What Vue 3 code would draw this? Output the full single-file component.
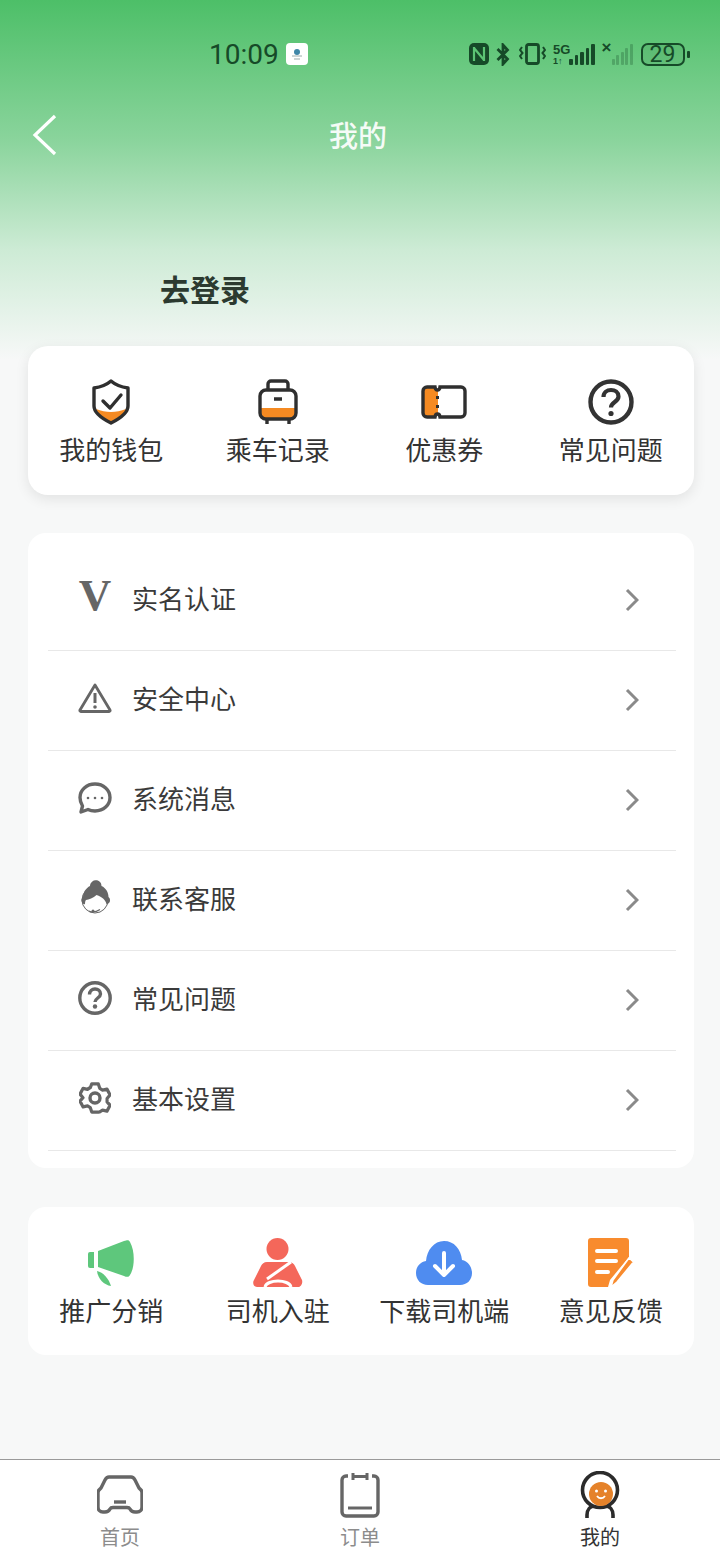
<template>
  <div class="page">
    <div class="status">
      <span class="time">10:09</span>
      <span class="app-badge">
        <svg width="14" height="14" viewBox="0 0 14 14">
          <circle cx="7" cy="5" r="3" fill="#3f86a8" />
          <path d="M2 9h10M4 12h6" stroke="#9aa" stroke-width="1" />
        </svg>
      </span>
      <svg class="st-nfc" width="20" height="22" viewBox="0 0 20 22">
        <rect x="0" y="0" width="20" height="22" rx="5" fill="#164a28" />
        <path d="M5 4v14M15 4v14M5 5l10 12" stroke="#5cc474" stroke-width="2.200" fill="none" />
      </svg>
      <svg class="st-bt" width="14" height="23" viewBox="0 0 14 23">
        <path d="M1.500 6l10 10-4.500 5V2l4.500 5-10 10" stroke="#164a28" stroke-width="2.800" fill="none" />
      </svg>
      <svg class="st-vib" width="27" height="22" viewBox="0 0 27 22">
        <rect x="7.500" y="1.500" width="12" height="19" rx="2" stroke="#164a28" stroke-width="2.800" fill="none" />
        <path d="M3 4l-2 3 2.500 3-2.500 3 2 3M24 4l2 3-2.500 3 2.500 3-2 3" stroke="#164a28" stroke-width="2" fill="none" />
      </svg>
      <span class="st-net">
        <span class="net-label">5G</span>
        <span class="net-sub">1↑</span>
      </span>
      <span class="bars">
        <i style="height: 6px"></i><i style="height: 10px"></i><i style="height: 13px"></i><i style="height: 17px"></i><i style="height: 21px"></i>
      </span>
      <span class="st-x">×</span>
      <span class="bars dim">
        <i style="height: 6px"></i><i style="height: 10px"></i><i style="height: 13px"></i><i style="height: 17px"></i><i style="height: 21px"></i>
      </span>
      <span class="battery">29</span>
      <span class="battery-nub"></span>
    </div>

    <div class="header">
      <svg class="back" width="26" height="42" viewBox="0 0 26 42">
        <path d="M23 2L3 21l20 19" stroke="#fff" stroke-width="3.200" fill="none" />
      </svg>
      <span class="title">我的</span>
    </div>

    <div class="login">去登录</div>

    <div class="card grid-card top-card">
      <div class="cell">
        <div class="cell-icon">
          <svg width="38" height="46" viewBox="0 0 38 46">
            <path d="M4 30c5 2 10 3 15 3s10-1 15-3c-2 6-9 10-15 13-6-3-13-7-15-13z" fill="#f58a22" />
            <path d="M19 2c4 3.500 10 6 17 7v18c0 7-9 13-17 17C11 40 2 34 2 27V9c7-1 13-3.500 17-7z" stroke="#2f2f2f" stroke-width="3.400" fill="none" stroke-linejoin="round" />
            <path d="M11 22l7 7 11-13" stroke="#2f2f2f" stroke-width="3.400" fill="none" stroke-linecap="round" stroke-linejoin="round" />
          </svg>
        </div>
        <span>我的钱包</span>
      </div>
      <div class="cell">
        <div class="cell-icon">
          <svg width="40" height="46" viewBox="0 0 40 46">
            <path d="M2 29h36v6a5 5 0 0 1-5 5H7a5 5 0 0 1-5-5z" fill="#f58a22" />
            <rect x="2" y="11" width="36" height="29" rx="6" stroke="#2f2f2f" stroke-width="3.400" fill="none" />
            <path d="M10 11V5a3 3 0 0 1 3-3h14a3 3 0 0 1 3 3v6" stroke="#2f2f2f" stroke-width="3.400" fill="none" />
            <path d="M16 20h8M9 40v5M31 40v5" stroke="#2f2f2f" stroke-width="3.400" fill="none" />
          </svg>
        </div>
        <span>乘车记录</span>
      </div>
      <div class="cell">
        <div class="cell-icon">
          <svg width="46" height="34" viewBox="0 0 46 34">
            <path d="M6 2h8c0 2 1 3 3 3v24c-2 0-3 1-3 3H6a4 4 0 0 1-4-4V6a4 4 0 0 1 4-4z" fill="#f58a22" />
            <path d="M6 2h8c.500 4 4.500 4 5 0h21a4 4 0 0 1 4 4v22a4 4 0 0 1-4 4H19c-.500-4-4.500-4-5 0H6a4 4 0 0 1-4-4V6a4 4 0 0 1 4-4z" stroke="#2f2f2f" stroke-width="3.400" fill="none" />
            <path d="M16.500 11v3M16.500 20v3" stroke="#2f2f2f" stroke-width="3" />
          </svg>
        </div>
        <span>优惠券</span>
      </div>
      <div class="cell">
        <div class="cell-icon">
          <svg width="46" height="46" viewBox="0 0 46 46">
            <circle cx="23" cy="23" r="20.500" stroke="#333" stroke-width="4.400" fill="none" />
            <path d="M15.500 18c0-4.500 3.500-7 7.500-7s7.500 2.500 7.500 6.500c0 5.500-7.500 5.500-7.500 11" stroke="#333" stroke-width="4.200" fill="none" />
            <circle cx="23" cy="34.500" r="2.600" fill="#333" />
          </svg>
        </div>
        <span>常见问题</span>
      </div>
    </div>

    <div class="card list-card">
      <div v-for="row in rows" :key="row.label" class="row">
        <div class="row-icon">
          <span v-if="row.id === 'v'" class="v-mark">V</span>
          <svg v-else-if="row.id === 'warn'" width="34" height="30" viewBox="0 0 34 30">
            <path d="M17 2L32 27a1 1 0 0 1-1 1.500H3A1 1 0 0 1 2 27z" stroke="#666" stroke-width="2.800" fill="none" stroke-linejoin="round" />
            <path d="M17 10v10" stroke="#666" stroke-width="3" />
            <circle cx="17" cy="24" r="1.800" fill="#666" />
          </svg>
          <svg v-else-if="row.id === 'chat'" width="34" height="32" viewBox="0 0 34 32">
            <path d="M17 2c8.500 0 15 6 15 13.500S25.500 29 17 29c-2.500 0-5-.500-7-1.500L3 30l1.500-6C3 21.500 2 18.500 2 15.500 2 8 8.500 2 17 2z" stroke="#666" stroke-width="3.400" fill="none" stroke-linejoin="round" />
            <circle cx="10" cy="16" r="1.300" fill="#666" />
            <circle cx="17" cy="16" r="1.300" fill="#666" />
            <circle cx="24" cy="16" r="1.300" fill="#666" />
          </svg>
          <svg v-else-if="row.id === 'staff'" width="32" height="36" viewBox="0 0 32 36">
            <circle cx="16" cy="20" r="13" stroke="#666" stroke-width="1" fill="#fff" />
            <path d="M16 0c4 0 6.500 2.500 6.500 6 4.500 2 7 6.500 7 11 2 1.500 2 4.500.500 6-1 1-2 1.500-2.500 1-1-4-4-7-10-9-3 3-8 4.500-10.500 5-.800 1-1 2.500-1 4-1 .500-2 0-3-1.500-1-2-.500-4.500 1-5.500 0-4.500 3-9 7-11 0-3 3-6 6.500-6z" fill="#666" />
            <path d="M10 31c3 1.500 7 1 11-1.500" stroke="#666" stroke-width="1.200" fill="none" />
            <circle cx="14" cy="31" r="1.500" fill="#666" />
          </svg>
          <svg v-else-if="row.id === 'help'" width="34" height="34" viewBox="0 0 34 34">
            <circle cx="17" cy="17" r="15.200" stroke="#666" stroke-width="3.400" fill="none" />
            <path d="M11.500 13.500c0-3.500 2.500-5.500 5.500-5.500s5.500 2 5.500 5c0 4-5.500 4-5.500 8" stroke="#666" stroke-width="3.400" fill="none" />
            <circle cx="17" cy="25.500" r="2.200" fill="#666" />
          </svg>
          <svg v-else width="32" height="32" viewBox="0 0 32 32">
            <path d="M12.500 2h7l1.500 4.500 3 1.800 4.700-1 3.300 6-3.200 3.700 0 3.500 0 0 3.200 3.500-3.300 6-4.700-1-3 1.800L19.500 31h-7l-1.500-4.500-3-1.800-4.700 1-3.300-6L3.200 16.200 0 12.500l3.300-6 4.700 1 3-1.800z" transform="translate(1 0) scale(.94 .97)" stroke="#666" stroke-width="3.400" fill="none" stroke-linejoin="round" />
            <circle cx="16" cy="16" r="5" stroke="#666" stroke-width="3.400" fill="none" />
          </svg>
        </div>
        <span class="row-label">{{ row.label }}</span>
        <svg class="chev" width="14" height="24" viewBox="0 0 14 24">
          <path d="M2 2l10 10L2 22" stroke="#8a8a8a" stroke-width="3" fill="none" />
        </svg>
      </div>
    </div>

    <div class="card grid-card bottom-card">
      <div class="cell">
        <div class="cell-icon">
          <svg width="46" height="48" viewBox="0 0 46 48">
            <path d="M0 15a2 2 0 0 1 2-2h4v16H2a2 2 0 0 1-2-2z" fill="#5ec77c" />
            <path d="M10 12L36 2c4-1.500 5-1 6 1 5 9 5 25 0 33-1 2-3 2.500-6 1L10 28z" fill="#5ec77c" />
            <path d="M9 32c6 1 12 8 14 15-7-1-13-7-14-15z" fill="#5ec77c" />
          </svg>
        </div>
        <span>推广分销</span>
      </div>
      <div class="cell">
        <div class="cell-icon">
          <svg width="50" height="50" viewBox="0 0 50 50">
            <circle cx="24.500" cy="11" r="11" fill="#f4675a" />
            <path d="M14 24h22c3 0 5 2 6 4l7 14c1 3-1 7-4 7H4c-3 0-5-4-3-7l7-14c1-2 3-4 6-4z" fill="#f4675a" />
            <path d="M38 24L14 41" stroke="#fff" stroke-width="3" />
            <path d="M12 49c2-8 24-8 26 0" stroke="#fff" stroke-width="3" fill="none" />
          </svg>
        </div>
        <span>司机入驻</span>
      </div>
      <div class="cell">
        <div class="cell-icon">
          <svg width="56" height="44" viewBox="0 0 56 44">
            <path d="M12 44C5 44 0 39 0 32c0-6 4-11 10-12C11 9 18 0 28 0s17 8 18 19c6 1 10 7 10 13 0 7-5 12-12 12z" fill="#4f8cf0" />
            <path d="M28 12v22M19 25l9 9 9-9" stroke="#fff" stroke-width="4" fill="none" stroke-linecap="round" stroke-linejoin="round" />
          </svg>
        </div>
        <span>下载司机端</span>
      </div>
      <div class="cell">
        <div class="cell-icon">
          <svg width="46" height="50" viewBox="0 0 46 50">
            <path d="M3 0h35c2 0 3 1 3 3v16L22 42l-2 7H3c-2 0-3-1-3-3V3c0-2 1-3 3-3z" fill="#f88b2e" />
            <path d="M9 13h19M9 23h19M9 34h11" stroke="#fff" stroke-width="4" stroke-linecap="round" />
            <path d="M41 20l4.500 4L29 44l-6 5 2-7z" fill="#f88b2e" stroke="#fff" stroke-width="1.500" stroke-linejoin="round" />
          </svg>
        </div>
        <span>意见反馈</span>
      </div>
    </div>

    <div class="tabbar">
      <div class="tab">
        <div class="tab-icon">
          <svg width="46" height="40" viewBox="0 0 46 40">
            <path d="M12 2h22c2 0 3 1 4 3l4 8 2 2c1 1 1 2 1 3v14c0 3-2 5-5 5h-2c-3 0-4-1-5-3-.500-1-1-1.500-3-1.500H16c-2 0-2.500.500-3 1.500-1 2-2 3-5 3H6c-3 0-5-2-5-5V18c0-1 0-2 1-3l2-2 4-8c1-2 2-3 4-3z" stroke="#666" stroke-width="3.400" fill="none" stroke-linejoin="round" />
            <path d="M17 27h12" stroke="#666" stroke-width="3.400" />
          </svg>
        </div>
        <span>首页</span>
      </div>
      <div class="tab">
        <div class="tab-icon">
          <svg width="40" height="46" viewBox="0 0 40 46">
            <path d="M8 4H6a4 4 0 0 0-4 4v32a4 4 0 0 0 4 4h28a4 4 0 0 0 4-4V8a4 4 0 0 0-4-4h-2" stroke="#666" stroke-width="3.400" fill="none" />
            <path d="M13 1v7M27 1v7M13 4.500h14" stroke="#666" stroke-width="3" fill="none" />
            <path d="M8 36h24" stroke="#666" stroke-width="3" />
          </svg>
        </div>
        <span>订单</span>
      </div>
      <div class="tab active">
        <div class="tab-icon">
          <svg width="40" height="48" viewBox="0 0 40 48">
            <path d="M7 47v-3c0-5 3-9 8-9h10c5 0 8 4 8 9v3" stroke="#2b2b2b" stroke-width="3.600" fill="none" />
            <circle cx="20" cy="19" r="17.500" fill="#fff" stroke="#2b2b2b" stroke-width="3.600" />
            <circle cx="21" cy="23" r="12" fill="#e5822a" />
            <circle cx="16.500" cy="20" r="1.500" fill="#fff" />
            <circle cx="25.500" cy="20" r="1.500" fill="#fff" />
            <path d="M17 25c2 3 6 3 8 0" stroke="#fff" stroke-width="1.800" fill="none" />
          </svg>
        </div>
        <span>我的</span>
      </div>
    </div>
  </div>
</template>

<script setup>
const rows = [
  { id: 'v', label: '实名认证' },
  { id: 'warn', label: '安全中心' },
  { id: 'chat', label: '系统消息' },
  { id: 'staff', label: '联系客服' },
  { id: 'help', label: '常见问题' },
  { id: 'gear', label: '基本设置' }
]
</script>

<style>
html,
body {
  margin: 0;
  background: #f7f8f8;
}
</style>

<style scoped>
.page {
  width: 720px;
  height: 1560px;
  display: flex;
  flex-direction: column;
  overflow: hidden;
  font-family: "Noto Sans CJK SC", "Noto Sans", sans-serif;
  color: #333;
  background: linear-gradient(180deg, #4dbf68 0, #8ad49c 140px, #cdebd5 250px, #f7f8f8 360px);
}

.status {
  height: 108px;
  padding-left: 209px;
  display: flex;
  align-items: center;
  color: #164a28;
  box-sizing: border-box;
}

.time {
  width: 77px;
  font-family: Roboto, sans-serif;
  font-size: 28px;
  padding-top: 1px;
}

.app-badge {
  width: 22px;
  height: 22px;
  margin-right: 161px;
  border-radius: 4px;
  background: #fff;
  display: flex;
  align-items: center;
  justify-content: center;
}

.st-bt {
  margin-left: 7px;
}

.st-vib {
  margin-left: 9px;
}

.st-net {
  width: 15px;
  margin-left: 7px;
  display: flex;
  flex-direction: column;
  font-family: "Liberation Sans", sans-serif;
  font-weight: 700;
  line-height: 10px;
}

.net-label {
  font-size: 13px;
  line-height: 13px;
}

.net-sub {
  font-size: 9px;
}

.bars {
  display: flex;
  align-items: flex-end;
  gap: 2px;
  margin-left: 1px;
  height: 22px;
}

.bars i {
  width: 3.500px;
  border-radius: 1px;
  background: #164a28;
}

.bars.dim {
  margin-left: 0;
  gap: 1.500px;
}

.bars.dim i {
  width: 3px;
  background: rgba(22, 74, 40, 0.28);
}

.st-x {
  width: 10px;
  margin-left: 7px;
  margin-bottom: 12px;
  font-family: "Liberation Sans", sans-serif;
  font-size: 17px;
  font-weight: 700;
  line-height: 10px;
}

.battery {
  width: 44px;
  height: 23px;
  margin-left: 8px;
  border: 2px solid #164a28;
  border-radius: 7px;
  box-sizing: border-box;
  background: rgba(22, 74, 40, 0.08);
  text-align: center;
  font-family: Roboto, sans-serif;
  font-size: 23px;
  line-height: 19px;
}

.battery-nub {
  width: 3px;
  height: 7px;
  margin-left: 2px;
  background: #164a28;
  border-radius: 1px;
}

.header {
  height: 54px;
  padding-left: 32px;
  display: flex;
  align-items: center;
}

.back {
  flex: none;
}

.title {
  width: 100%;
  margin-left: -32px;
  padding-right: 32px;
  text-align: center;
  font-size: 29px;
  color: #fff;
  opacity: 0.92;
  font-weight: 500;
  box-sizing: border-box;
  transform: translate(4px, -1px);
}

.login {
  height: 184px;
  padding: 108px 0 0 160px;
  box-sizing: border-box;
  font-size: 30px;
  line-height: 36px;
  font-weight: 700;
  color: #2c3a30;
}

.card {
  width: 666px;
  margin-left: 28px;
  background: #fff;
  border-radius: 18px;
  box-sizing: border-box;
}

.grid-card {
  display: grid;
  grid-template-columns: repeat(4, 1fr);
}

.top-card {
  height: 149px;
  padding-top: 33px;
  border-radius: 20px;
  box-shadow: 0 4px 14px rgba(0, 0, 0, 0.09);
}

.bottom-card {
  height: 148px;
  margin-top: 39px;
  padding-top: 31px;
}

.cell {
  display: flex;
  flex-direction: column;
  align-items: center;
  font-size: 26px;
  line-height: 30px;
  white-space: nowrap;
  color: #333;
}

.top-card .cell-icon {
  height: 46px;
  margin-bottom: 9px;
}

.bottom-card .cell-icon {
  height: 50px;
  margin-bottom: 7px;
}

.cell-icon {
  display: flex;
  align-items: center;
  justify-content: center;
}

.list-card {
  height: 635px;
  margin-top: 38px;
  padding: 18px 18px 17px 20px;
}

.row {
  height: 100px;
  padding: 0 37px 0 30px;
  box-sizing: border-box;
  display: flex;
  align-items: center;
  border-bottom: 1px solid #e8e8e8;
}

.row-icon {
  width: 34px;
  height: 36px;
  margin-right: 20px;
  margin-bottom: 5px;
  display: flex;
  align-items: center;
  justify-content: center;
  flex: none;
}

.v-mark {
  font-family: "Liberation Serif", serif;
  font-size: 45px;
  font-weight: 700;
  line-height: 36px;
  color: #666;
  transform: translateY(-3px);
}

.row-label {
  flex: 1;
  padding-bottom: 6px;
  font-size: 26px;
  color: #3a3a3a;
}

.chev {
  margin-bottom: 2px;
}

.tabbar {
  height: 101px;
  margin-top: auto;
  padding-top: 11px;
  box-sizing: border-box;
  background: #fff;
  border-top: 1px solid #9a9a9a;
  display: grid;
  grid-template-columns: repeat(3, 240px);
}

.tab {
  display: flex;
  flex-direction: column;
  align-items: center;
  font-size: 20px;
  line-height: 28px;
  color: #8c8c8c;
}

.tab-icon {
  height: 48px;
  margin-bottom: 4px;
  display: flex;
  align-items: center;
  justify-content: center;
}

.tab.active {
  color: #333;
}
</style>
